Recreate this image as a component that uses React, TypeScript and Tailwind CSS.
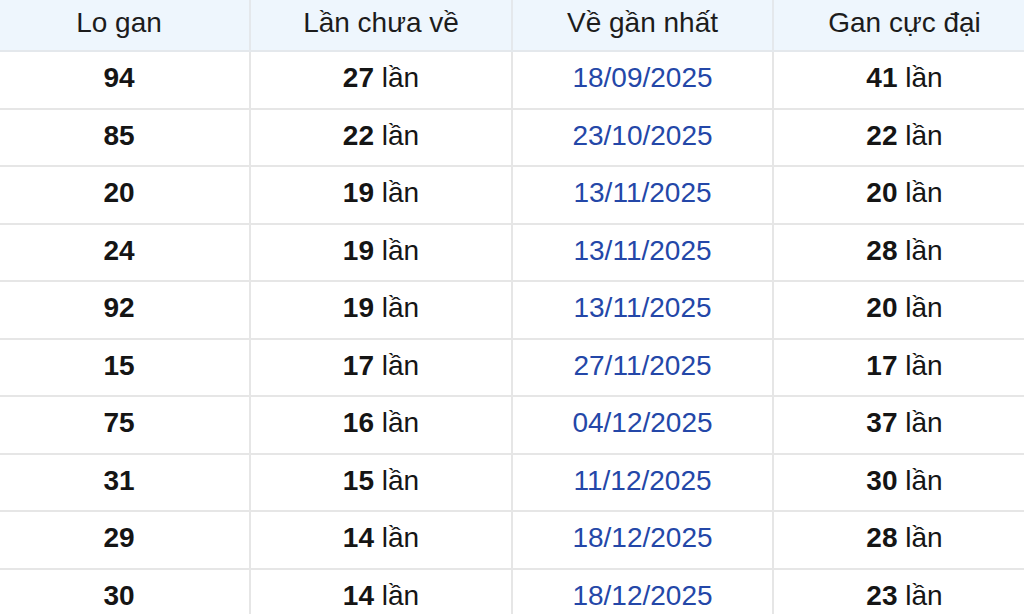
import React from "react";

const rows: [string, string, string, string][] = [
  ["94", "27", "18/09/2025", "41"],
  ["85", "22", "23/10/2025", "22"],
  ["20", "19", "13/11/2025", "20"],
  ["24", "19", "13/11/2025", "28"],
  ["92", "19", "13/11/2025", "20"],
  ["15", "17", "27/11/2025", "17"],
  ["75", "16", "04/12/2025", "37"],
  ["31", "15", "11/12/2025", "30"],
  ["29", "14", "18/12/2025", "28"],
  ["30", "14", "18/12/2025", "23"],
];

const headers = ["Lo gan", "Lần chưa về", "Về gần nhất", "Gan cực đại"];

export default function App() {
  return (
    <div
      className="w-[1024px] h-[614px] overflow-hidden bg-white text-[28px] text-[#151515]"
      style={{ fontFamily: '"Liberation Sans", Arial, sans-serif' }}
    >
      <div className="ml-[-11px] w-[1046px] grid grid-cols-[262px_262px_261px_261px]">
        {headers.map((h, i) => (
          <div
            key={h}
            className={`h-[52px] flex items-center justify-center bg-[#eef6fd] border-b-2 border-[#e4e8ec] pb-[4px] text-[#1c1c1c] ${i < 3 ? "border-r-2" : ""}`}
          >
            {h}
          </div>
        ))}
        {rows.map((r, ri) => (
          <React.Fragment key={ri}>
            <div className="h-[57.5px] flex items-center justify-center border-b-2 border-r-2 border-[#e6e6e6] pb-[3px] font-bold">
              {r[0]}
            </div>
            <div className="h-[57.5px] flex items-center justify-center border-b-2 border-r-2 border-[#e6e6e6] pb-[3px]">
              <span className="font-bold">{r[1]}</span>
              <span>&nbsp;lần</span>
            </div>
            <div className="h-[57.5px] flex items-center justify-center border-b-2 border-r-2 border-[#e6e6e6] pb-[3px] text-[#2447a8]">
              {r[2]}
            </div>
            <div className="h-[57.5px] flex items-center justify-center border-b-2 border-[#e6e6e6] pb-[3px]">
              <span className="font-bold">{r[3]}</span>
              <span>&nbsp;lần</span>
            </div>
          </React.Fragment>
        ))}
      </div>
    </div>
  );
}
